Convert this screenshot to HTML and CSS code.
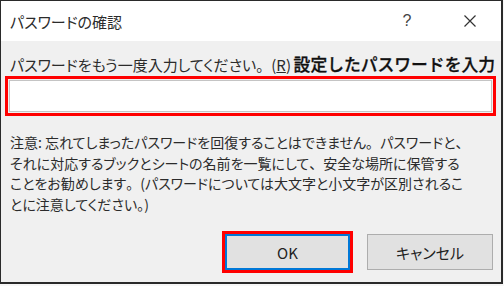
FILE: index.html
```html
<!DOCTYPE html>
<html lang="ja">
<head>
<meta charset="utf-8">
<link rel="stylesheet" href="styles.css">
</head>
<body>
<div class="dialog">
  <div class="titlebar">
    <span class="title">パスワードの確認</span>
    <span class="help">?</span>
    <span class="close">
      <svg width="14" height="14" viewBox="0 0 14 14"><path d="M1.5 1.5 L12.5 12.5 M12.5 1.5 L1.5 12.5" stroke="#333" stroke-width="1.2" fill="none"/></svg>
    </span>
  </div>
  <div class="content">
    <div class="label-row">
      <span class="label">パスワードをもう一度入力してください<span class="fw">。</span>(<u>R</u>)</span>
      <span class="note-red">設定したパスワードを入力</span>
    </div>
    <div class="hl-input">
      <div class="input"></div>
    </div>
    <p class="notice">注意: 忘れてしまったパスワードを回復することはできません<span class="fw">。</span>パスワードと<span class="fw">、</span><br>それに対応するブックとシートの名前を一覧にして<span class="fw">、</span>安全な場所に保管する<br>ことをお勧めします<span class="fw">。</span>(パスワードについては大文字と小文字が区別されるこ<br>とに注意してください<span class="fw">。</span>)</p>
    <div class="buttons">
      <div class="hl-btn"><div class="btn btn-default">OK</div></div>
      <div class="btn">キャンセル</div>
    </div>
  </div>
</div>
</body>
</html>
```
FILE: styles.css
```css
html, body {
  margin: 0;
  padding: 0;
  background: #f7f7f7;
}
body {
  width: 504px;
  height: 286px;
  overflow: hidden;
  font-family: "Noto Sans CJK JP", "Noto Sans", sans-serif;
  color: #222;
}
.dialog {
  width: 503px;
  height: 284px;
  box-sizing: border-box;
  border: 1px solid #2a2a2a;
  border-right-width: 2px;
  border-bottom-width: 2px;
  background: #f0f0f0;
  display: flex;
  flex-direction: column;
}
.titlebar {
  height: 40px;
  background: #fff;
  display: flex;
  align-items: center;
  padding-left: 9px;
  font-size: 15px;
  font-feature-settings: "palt";
}
.title {
  flex: 1;
  color: #2b2b2b;
}
.help {
  font-family: "Liberation Sans", sans-serif;
  font-size: 16px;
  color: #444;
  width: 14px;
  text-align: center;
  margin-right: 49px;
}
.close {
  display: flex;
  margin-right: 24px;
}
.content {
  flex: 1;
  padding: 13px 0 0 0;
  display: flex;
  flex-direction: column;
}
.label-row {
  display: flex;
  align-items: center;
  height: 20px;
  padding: 0 6px 0 9px;
}
.label {
  font-size: 15px;
  font-feature-settings: "palt";
  color: #2b2b2b;
  white-space: nowrap;
}
.fw {
  font-feature-settings: normal;
}
.note-red {
  margin-left: auto;
  font-size: 16.8px;
  font-weight: 500;
  color: #111;
  white-space: nowrap;
  -webkit-text-stroke: 0.3px #111;
}
.hl-input {
  margin: 2px 0 0 4px;
  width: 491px;
  height: 40px;
  box-sizing: border-box;
  border: 3px solid #f00;
  padding: 1px;
}
.input {
  height: 100%;
  box-sizing: border-box;
  border: 1px solid #c4c4c4;
  background: #fff;
}
.notice {
  margin: 16px 0 0 9px;
  font-size: 14px;
  line-height: 20.5px;
  font-feature-settings: "palt";
  color: #2b2b2b;
  white-space: nowrap;
}
.buttons {
  margin-top: auto;
  margin-bottom: 9px;
  display: flex;
  justify-content: flex-end;
  align-items: center;
  gap: 14px;
  padding-right: 8px;
}
.hl-btn {
  border: 3px solid #f00;
  display: flex;
}
.btn {
  width: 126px;
  height: 36px;
  box-sizing: border-box;
  border: 1px solid #adadad;
  background: #e1e1e1;
  display: flex;
  align-items: center;
  justify-content: center;
  font-size: 15px;
  font-feature-settings: "palt";
  color: #222;
}
.btn-default {
  width: 125px;
  border: 2px solid #0078d7;
}
```
